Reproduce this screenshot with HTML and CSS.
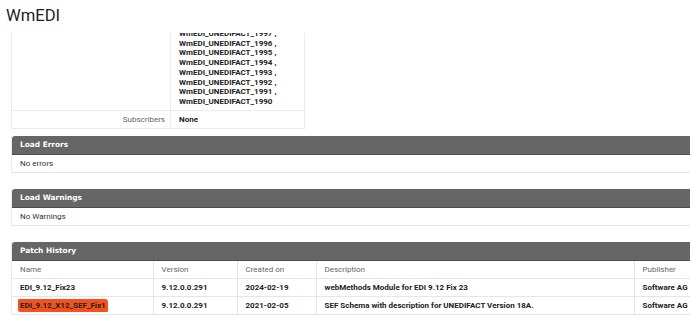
FILE: index.html
```html
<!DOCTYPE html>
<html lang="en">
<head>
    <meta charset="UTF-8">
    <meta name="viewport" content="width=device-width, initial-scale=1.0">
    <title>WmEDI</title>
    <link rel="stylesheet" href="styles.css">
</head>
<body>
    <div class="page-title">
        <h1>WmEDI</h1>
    </div>
    <div class="content">
        <div class="scroller">
            <table class="props">
                <tr>
                    <td class="props-label"></td>
                    <td class="props-value">
                        WmEDI_UNEDIFACT_1997 ,<br>
                        WmEDI_UNEDIFACT_1996 ,<br>
                        WmEDI_UNEDIFACT_1995 ,<br>
                        WmEDI_UNEDIFACT_1994 ,<br>
                        WmEDI_UNEDIFACT_1993 ,<br>
                        WmEDI_UNEDIFACT_1992 ,<br>
                        WmEDI_UNEDIFACT_1991 ,<br>
                        WmEDI_UNEDIFACT_1990
                    </td>
                </tr>
                <tr class="props-row">
                    <td class="props-label">Subscribers</td>
                    <td class="props-value">None</td>
                </tr>
            </table>

            <div class="panel">
                <div class="panel-header">Load Errors</div>
                <div class="panel-body">No errors</div>
            </div>

            <div class="panel">
                <div class="panel-header">Load Warnings</div>
                <div class="panel-body">No Warnings</div>
            </div>

            <div class="panel">
                <div class="panel-header">Patch History</div>
                <table class="patches">
                    <colgroup>
                        <col class="col-name">
                        <col class="col-version">
                        <col class="col-created">
                        <col class="col-desc">
                        <col class="col-publisher">
                    </colgroup>
                    <tr class="patches-head">
                        <td>Name</td>
                        <td>Version</td>
                        <td>Created on</td>
                        <td>Description</td>
                        <td>Publisher</td>
                    </tr>
                    <tr>
                        <td>EDI_9.12_Fix23</td>
                        <td>9.12.0.0.291</td>
                        <td>2024-02-19</td>
                        <td>webMethods Module for EDI 9.12 Fix 23</td>
                        <td>Software AG</td>
                    </tr>
                    <tr>
                        <td><span class="marked">EDI_9.12_X12_SEF_Fix1</span></td>
                        <td>9.12.0.0.291</td>
                        <td>2021-02-05</td>
                        <td>SEF Schema with description for UNEDIFACT Version 18A.</td>
                        <td>Software AG</td>
                    </tr>
                </table>
            </div>
        </div>
    </div>
</body>
</html>
```

FILE: styles.css
```css
body, html {
    margin: 0;
    padding: 0;
    background-color: #fff;
    font-family: Roboto, "Liberation Sans", sans-serif;
    color: #222;
    overflow: hidden;
}
.page-title {
    height: 33px;
    padding: 0 0 0 6px;
    box-sizing: border-box;
}
.page-title h1 {
    margin: 0;
    padding-top: 6px;
    font-size: 16.6px;
    line-height: 20px;
    font-weight: 400;
    color: #222;
}
.content {
    height: 283px;
    overflow: hidden;
    padding-left: 11px;
    width: 720px;
}
.scroller {
    margin-top: -8px;
}
.props {
    border-collapse: collapse;
    width: 294px;
    font-size: 8px;
    border: 1px solid #ececec;
    border-top: none;
}
.props td {
    padding: 0 5px 0 8px;
    vertical-align: top;
}
.props-label {
    width: 145px;
    text-align: right;
    color: #666;
    border-right: 1px solid #ececec;
}
.props-value {
    font-weight: 700;
    line-height: 9.7px;
    padding-top: 4px !important;
    padding-bottom: 3px !important;
}
.props-row td {
    border-top: 1px solid #ececec;
    line-height: 17px;
    padding-top: 0 !important;
    padding-bottom: 0 !important;
}
.panel {
    margin-top: 7px;
    margin-bottom: 16px;
    border-left: 1px solid #ececec;
}
.panel + .panel {
    margin-top: 0;
}
.panel-header {
    height: 18px;
    line-height: 18px;
    padding-left: 8px;
    background-color: #666;
    border-bottom: 1px solid #4d4d4d;
    border-top-left-radius: 3px;
    color: #fff;
    font-family: "DejaVu Sans", Verdana, sans-serif;
    font-size: 7.4px;
    font-weight: 700;
}
.panel-body {
    height: 17px;
    line-height: 17px;
    padding-left: 8px;
    font-size: 8px;
    color: #333;
    border-bottom: 1px solid #e6e6e6;
}
.patches {
    border-collapse: collapse;
    table-layout: fixed;
    width: 100%;
    font-size: 8px;
}
.col-name { width: 141px; }
.col-version { width: 84px; }
.col-created { width: 79px; }
.col-desc { width: 318px; }
.patches td {
    height: 17px;
    padding: 0 0 0 8px;
    border-bottom: 1px solid #e6e6e6;
    border-left: 1px solid #e6e6e6;
    font-weight: 700;
    white-space: nowrap;
}
.patches td:first-child {
    border-left: none;
}
.patches-head td {
    font-weight: 400;
    color: #666;
}
.marked {
    background-color: #f4511e;
    padding: 2px 2px 2px 2px;
    margin-left: -2px;
    border-radius: 1px 3px 1px 2px;
}
```
